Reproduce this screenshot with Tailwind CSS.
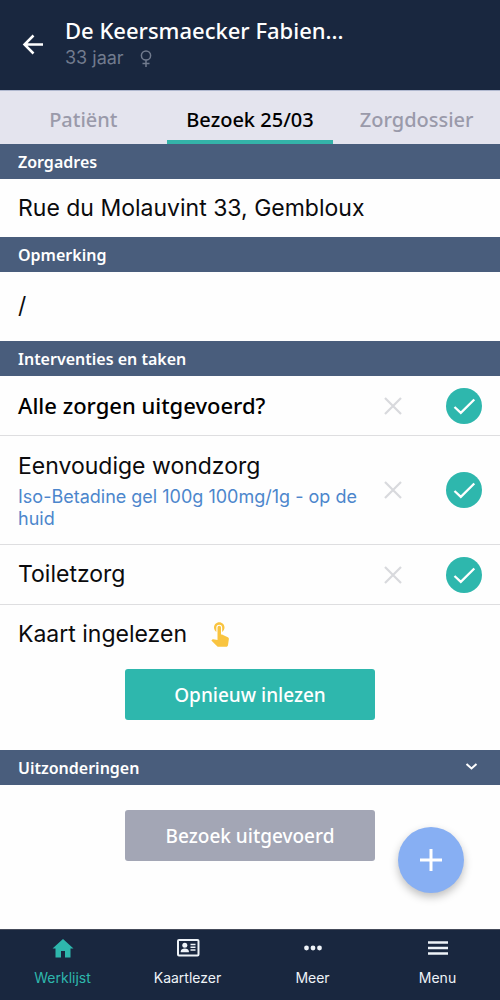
<!DOCTYPE html>
<html lang="nl">
<head>
<meta charset="utf-8">
<meta name="viewport" content="width=device-width, initial-scale=1">
<title>Bezoek 25/03</title>
<script src="https://cdn.jsdelivr.net/npm/@tailwindcss/browser@4"></script>
</head>
<body class="flex min-h-screen flex-col bg-[#fefefe] font-['Inter',sans-serif] text-[#0b0b0d]">

<svg class="hidden" aria-hidden="true">
  <symbol id="cross" viewBox="0 0 18 18"><path d="M1 1l16 16M17 1L1 17" fill="none" stroke="currentColor" stroke-width="2.200"/></symbol>
  <symbol id="check" viewBox="0 0 36 36"><path d="M8.500 19l6.300 5.800L28.300 11.500" fill="none" stroke="currentColor" stroke-width="2.300"/></symbol>
</svg>

<header class="flex h-[90px] items-center gap-5 bg-[#19273f] pb-0.5 pl-5">
  <button type="button" aria-label="Terug" class="text-white">
    <svg class="size-[25px]" viewBox="0 0 25 25" fill="none" stroke="currentColor" stroke-width="2.500"><path d="M23 12.500H4M13.500 3.500l-9 9 9 9"/></svg>
  </button>
  <div class="min-w-0">
    <h1 class="truncate font-['Noto_Sans',sans-serif] text-[22px] leading-7 font-medium text-white">De Keersmaecker Fabien...</h1>
    <p class="flex items-center gap-4 text-[18px] leading-7 text-[#717b8e]">33 jaar
      <svg class="h-[17px] w-3" viewBox="0 0 12 17" fill="none" stroke="currentColor" stroke-width="1.500" role="img" aria-label="Vrouw"><circle cx="6" cy="5.500" r="4.600"/><path d="M6 10v7M2.500 13.500h7"/></svg>
    </p>
  </div>
</header>

<nav class="grid h-[54px] grid-cols-3 border-t border-[#b0b8cf] bg-[#e4e4ee] font-['Noto_Sans',sans-serif] text-[20px] font-medium text-[#9a9aaa]">
  <a href="#patient" class="flex items-center justify-center border-b-4 border-transparent pt-2">Patiënt</a>
  <a href="#bezoek" aria-current="page" class="flex items-center justify-center border-b-4 border-[#34b3a9] pt-2 text-black">Bezoek 25/03</a>
  <a href="#dossier" class="flex items-center justify-center border-b-4 border-transparent pt-2">Zorgdossier</a>
</nav>

<main class="relative grow">
  <h2 class="flex h-[35px] items-center bg-[#495d7c] px-[18px] font-['Noto_Sans',sans-serif] text-[16px] font-semibold text-white">Zorgadres</h2>
  <p class="flex h-[58px] items-center px-[18px] text-[23px]">Rue du Molauvint 33, Gembloux</p>

  <h2 class="flex h-[35px] items-center bg-[#495d7c] px-[18px] font-['Noto_Sans',sans-serif] text-[16px] font-semibold text-white">Opmerking</h2>
  <p class="flex h-[69px] items-center px-[18px] text-[23px]">/</p>

  <h2 class="flex h-[35px] items-center bg-[#495d7c] px-[18px] font-['Noto_Sans',sans-serif] text-[16px] font-semibold text-white">Interventies en taken</h2>
  <ul>
    <li class="flex min-h-[60px] items-center border-b border-[#dedee0] px-[18px]">
      <p class="grow font-['Noto_Sans',sans-serif] text-[22px] font-medium text-black">Alle zorgen uitgevoerd?</p>
      <button type="button" aria-label="Niet uitgevoerd" class="mr-11 shrink-0 text-[#d8d9dd]"><svg class="size-[18px]"><use href="#cross"/></svg></button>
      <button type="button" aria-label="Uitgevoerd" class="shrink-0 rounded-full bg-[#2eb7ad] text-white"><svg class="size-9"><use href="#check"/></svg></button>
    </li>
    <li class="flex min-h-[109px] items-center border-b border-[#dedee0] px-[18px]">
      <div class="grow">
        <p class="pb-1 text-[23px] leading-8">Eenvoudige wondzorg</p>
        <p class="text-[18px] leading-[22px] text-[#4c86cc]">Iso-Betadine gel 100g 100mg/1g - op de huid</p>
      </div>
      <button type="button" aria-label="Niet uitgevoerd" class="mr-11 ml-4 shrink-0 text-[#d8d9dd]"><svg class="size-[18px]"><use href="#cross"/></svg></button>
      <button type="button" aria-label="Uitgevoerd" class="shrink-0 rounded-full bg-[#2eb7ad] text-white"><svg class="size-9"><use href="#check"/></svg></button>
    </li>
    <li class="flex min-h-[60px] items-center border-b border-[#dedee0] px-[18px]">
      <p class="grow text-[23px]">Toiletzorg</p>
      <button type="button" aria-label="Niet uitgevoerd" class="mr-11 shrink-0 text-[#d8d9dd]"><svg class="size-[18px]"><use href="#cross"/></svg></button>
      <button type="button" aria-label="Uitgevoerd" class="shrink-0 rounded-full bg-[#2eb7ad] text-white"><svg class="size-9"><use href="#check"/></svg></button>
    </li>
  </ul>

  <div class="flex h-[58px] items-center gap-5 px-[18px] text-[23px]">Kaart ingelezen
    <svg class="size-7" viewBox="1 1 24 24" fill="#f9c440" aria-hidden="true"><path d="M9 11.240V7.500a2.500 2.500 0 0 1 5 0v3.740c1.210-.81 2-2.180 2-3.740C16 5.010 13.990 3 11.500 3S7 5.010 7 7.500c0 1.560.79 2.930 2 3.740zm9.840 4.630l-4.540-2.260c-.17-.07-.35-.11-.54-.11H13v-6a1.500 1.500 0 0 0-3 0v10.740l-3.430-.72c-.08-.01-.15-.03-.24-.03-.31 0-.59.13-.79.33l-.79.8 4.940 4.940c.27.27.65.44 1.060.44h6.790c.75 0 1.330-.55 1.440-1.280l.75-5.270c.01-.07.02-.14.02-.2 0-.62-.38-1.160-.91-1.380z"/></svg>
  </div>
  <button type="button" class="mx-auto mt-1.5 mb-[30px] block h-[51px] w-1/2 rounded-[3px] bg-[#2eb7ad] pt-0.5 font-['Noto_Sans',sans-serif] text-[19px] font-medium text-white">Opnieuw inlezen</button>

  <h2 class="bg-[#495d7c] font-['Noto_Sans',sans-serif] text-[16px] font-semibold text-white">
    <button type="button" aria-expanded="false" class="flex h-[35px] w-full items-center justify-between px-[18px]">Uitzonderingen
      <svg class="mr-1 h-3 w-[13px]" viewBox="0 0 13 12" fill="none" stroke="currentColor" stroke-width="2" aria-hidden="true"><path d="M1.500 2l5 4.500L11.500 2"/></svg>
    </button>
  </h2>
  <button type="button" disabled class="mx-auto mt-[25px] block h-[51px] w-1/2 rounded-[3px] bg-[#a3a6b5] pt-0.5 font-['Noto_Sans',sans-serif] text-[19px] font-medium text-white">Bezoek uitgevoerd</button>

  <button type="button" aria-label="Toevoegen" class="absolute right-9 bottom-9 flex size-[66px] items-center justify-center rounded-full bg-[#87aff3] text-white shadow-[0_4px_8px_rgba(0,0,0,0.25)]">
    <svg class="size-[22px]" viewBox="0 0 22 22" fill="none" stroke="currentColor" stroke-width="3"><path d="M11 0v22M0 11h22"/></svg>
  </button>
</main>

<nav class="grid h-[71px] grid-cols-4 border-t border-[#454b5a] bg-[#19273f] text-[14px] leading-5 text-[#eef3f8]">
  <a href="#werklijst" aria-current="page" class="flex flex-col items-center gap-2 pt-1.5 text-[#2eb7ad]">
    <svg class="size-6" viewBox="0 0 24 24" fill="currentColor" aria-hidden="true"><path d="M10 21.500v-6.500h4v6.500h5.500v-9h3L12 3 1.500 12.500h3v9z"/></svg>
    Werklijst
  </a>
  <a href="#kaartlezer" class="flex flex-col items-center gap-2 pt-1.5">
    <svg class="size-6" viewBox="0 0 24 24" fill="currentColor" aria-hidden="true"><rect x="2" y="4" width="20.500" height="15.500" rx="1" fill="none" stroke="currentColor" stroke-width="2"/><circle cx="8.800" cy="9.200" r="2.500"/><path d="M4.800 16.300v-1c0-2 1.800-2.800 4-2.800s4 .8 4 2.800v1z"/><path d="M14.500 8.500h5M14.500 11.200h5M14.500 14h5" stroke="currentColor" stroke-width="1.400"/></svg>
    Kaartlezer
  </a>
  <a href="#meer" class="flex flex-col items-center gap-2 pt-1.5">
    <svg class="size-6" viewBox="0 0 24 24" fill="currentColor" aria-hidden="true"><circle cx="5.500" cy="12" r="2.400"/><circle cx="12" cy="12" r="2.400"/><circle cx="18.500" cy="12" r="2.400"/></svg>
    Meer
  </a>
  <a href="#menu" class="flex flex-col items-center gap-2 pt-1.5">
    <svg class="size-6" viewBox="0 0 24 24" fill="none" stroke="currentColor" stroke-width="2.500" aria-hidden="true"><path d="M2 6.500h20M2 12h20M2 17.500h20"/></svg>
    Menu
  </a>
</nav>
</body>
</html>
